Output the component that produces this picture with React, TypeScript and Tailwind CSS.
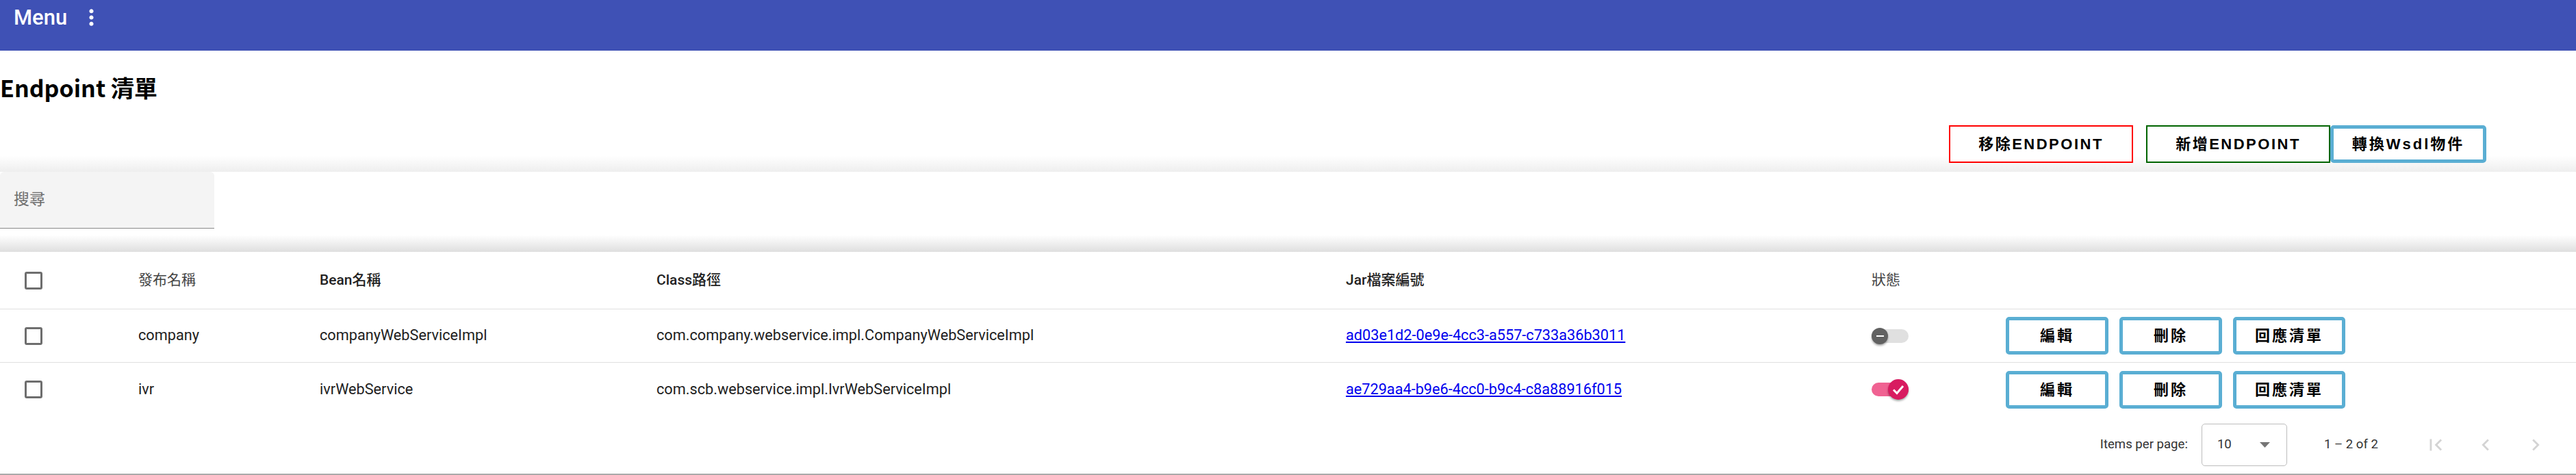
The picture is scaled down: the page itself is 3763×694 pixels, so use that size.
import React from "react";

const rows = [
  {
    name: "company",
    bean: "companyWebServiceImpl",
    cls: "com.company.webservice.impl.CompanyWebServiceImpl",
    jar: "ad03e1d2-0e9e-4cc3-a557-c733a36b3011",
    on: false,
  },
  {
    name: "ivr",
    bean: "ivrWebService",
    cls: "com.scb.webservice.impl.IvrWebServiceImpl",
    jar: "ae729aa4-b9e6-4cc0-b9c4-c8a88916f015",
    on: true,
  },
];

const grid =
  "grid grid-cols-[202px_265px_492px_1007px_768px_196px_1fr] items-center";

function Checkbox() {
  return (
    <div className="ml-[36px] w-[26px] h-[26px] border-[3px] border-[#6e6e6e] rounded-[3px]" />
  );
}

function Toggle({ on }: { on: boolean }) {
  return (
    <div
      className={`relative w-[54px] h-[20px] rounded-full ${
        on ? "bg-[#f06292]" : "bg-[#e0e0e0]"
      }`}
    >
      {on ? (
        <div className="absolute right-0 top-1/2 -translate-y-1/2 w-[30px] h-[30px] rounded-full bg-[#d81b60] shadow-[0_2px_3px_rgba(0,0,0,0.35)] flex items-center justify-center">
          <svg width="30" height="30" viewBox="0 0 30 30">
            <polyline
              points="8,15.5 13,20.5 22,10"
              fill="none"
              stroke="white"
              strokeWidth="3"
            />
          </svg>
        </div>
      ) : (
        <div className="absolute left-0 top-1/2 -translate-y-1/2 w-[24px] h-[24px] rounded-full bg-[#616161] shadow-[0_2px_3px_rgba(0,0,0,0.35)] flex items-center justify-center">
          <div className="w-[11px] h-[2px] bg-white" />
        </div>
      )}
    </div>
  );
}

function ActionBtn({ label, w }: { label: string; w: string }) {
  return (
    <div
      className={`${w} h-[55px] border-[5px] border-[#5aaed3] rounded-[5px] bg-white flex items-center justify-center text-[22px] font-bold tracking-[3px] text-black font-['Liberation_Sans','Noto_Sans_CJK_TC',sans-serif]`}
    >
      {label}
    </div>
  );
}

export default function App() {
  return (
    <div className="w-[3763px] h-[694px] overflow-hidden bg-white font-['Roboto','Noto_Sans_CJK_TC',sans-serif] text-[#212121]">
      {/* Toolbar */}
      <header className="h-[74px] bg-[#3f51b5] flex items-start">
        <span className="ml-[20px] mt-[7px] text-[31px] leading-[37px] font-medium text-white">
          Menu
        </span>
        <svg
          className="ml-[17px] mt-[7px]"
          width="37"
          height="37"
          viewBox="0 0 24 24"
          fill="white"
        >
          <path d="M12 8c1.1 0 2-.9 2-2s-.9-2-2-2-2 .9-2 2 .9 2 2 2zm0 2c-1.1 0-2 .9-2 2s.9 2 2 2 2-.9 2-2-.9-2-2-2zm0 6c-1.1 0-2 .9-2 2s.9 2 2 2 2-.9 2-2-.9-2-2-2z" />
        </svg>
      </header>

      {/* Title */}
      <h1 className="mt-[29px] h-[50px] text-[34px] leading-[50px] font-bold text-black font-['Noto_Sans_CJK_TC',sans-serif]">
        Endpoint 清單
      </h1>

      {/* Top buttons */}
      <div className="h-[98px] pt-[30px] pr-[131px] flex justify-end items-start bg-gradient-to-b from-white from-[76%] to-[#eeeeee] font-['Liberation_Sans','Noto_Sans_CJK_TC',sans-serif] text-[22px] font-bold text-black">
        <div className="w-[269px] h-[55px] border-2 border-[#ff0000] bg-white flex items-center justify-center tracking-[2.5px]">
          移除ENDPOINT
        </div>
        <div className="ml-[19px] w-[269px] h-[55px] border-2 border-[#006400] bg-white flex items-center justify-center tracking-[2.5px]">
          新增ENDPOINT
        </div>
        <div className="w-[228px] h-[55px] border-[5px] border-[#5aaed3] rounded-[5px] bg-white flex items-center justify-center tracking-[3px]">
          轉換Wsdl物件
        </div>
      </div>

      {/* Search */}
      <div className="h-[117px] bg-gradient-to-b from-white from-[79%] to-[#dfdfdf]">
        <div className="w-[313px] h-[83px] bg-[#f4f4f4] rounded-t-[6px] border-b border-[#8a8a8a] flex items-center pl-[20px] text-[23px] text-[#6e6e6e]">
          搜尋
        </div>
      </div>

      {/* Table */}
      <div className={`${grid} h-[84px] border-b border-[#e0e0e0] text-[21px] font-medium text-[#222]`}>
        <div>
          <Checkbox />
        </div>
        <div className="font-normal text-[#444]">發布名稱</div>
        <div>Bean名稱</div>
        <div>Class路徑</div>
        <div>Jar檔案編號</div>
        <div className="font-normal text-[#444]">狀態</div>
        <div />
      </div>
      {rows.map((r, i) => (
        <div
          key={r.name}
          className={`${grid} h-[78px] text-[21.7px] ${
            i === 0 ? "border-b border-[#e0e0e0]" : ""
          }`}
        >
          <div>
            <Checkbox />
          </div>
          <div>{r.name}</div>
          <div>{r.bean}</div>
          <div>{r.cls}</div>
          <div>
            <a href="#" className="text-[#0000ee] underline">
              {r.jar}
            </a>
          </div>
          <div>
            <Toggle on={r.on} />
          </div>
          <div className="flex gap-[16px]">
            <ActionBtn label="編輯" w="w-[150px]" />
            <ActionBtn label="刪除" w="w-[150px]" />
            <ActionBtn label="回應清單" w="w-[164px]" />
          </div>
        </div>
      ))}

      {/* Paginator */}
      <div className="h-[86px] border-b-2 border-[#aaaaaa] flex items-center justify-end pr-[23px] text-[18.6px] text-[#333]">
        <span>Items per page:</span>
        <div className="ml-[20px] w-[125px] h-[62px] border border-[#bdbdbd] rounded-[5px] flex items-center pl-[22px] pr-[24px]">
          <span>10</span>
          <svg className="ml-auto" width="15" height="8" viewBox="0 0 15 8">
            <polygon points="0,0 15,0 7.5,8" fill="#757575" />
          </svg>
        </div>
        <span className="ml-[54px] mr-[47px]">1 – 2 of 2</span>
        <div className="w-[73px] flex justify-center">
          <svg width="34" height="34" viewBox="0 0 24 24" fill="#d4d4d4">
            <path d="M18.41 16.59L13.82 12l4.59-4.59L17 6l-6 6 6 6zM6 6h2v12H6z" />
          </svg>
        </div>
        <div className="w-[73px] flex justify-center">
          <svg width="34" height="34" viewBox="0 0 24 24" fill="#d4d4d4">
            <path d="M15.41 7.41L14 6l-6 6 6 6 1.41-1.41L10.83 12z" />
          </svg>
        </div>
        <div className="w-[73px] flex justify-center">
          <svg width="34" height="34" viewBox="0 0 24 24" fill="#d4d4d4">
            <path d="M10 6L8.59 7.41 13.17 12l-4.58 4.59L10 18l6-6z" />
          </svg>
        </div>
      </div>
    </div>
  );
}
